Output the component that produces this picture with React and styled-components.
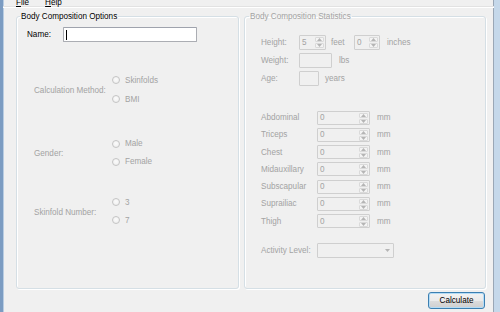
import styled, { createGlobalStyle } from "styled-components";

const GlobalStyle = createGlobalStyle`
    html, body {
        margin: 0;
        padding: 0;
        background: #f0f0f0;
    }
    body {
        font-family: "Liberation Sans", Arial, sans-serif;
        font-size: 8.15px;
    }
`;

const Window = styled.div`
    width: 500px;
    height: 312px;
    box-sizing: border-box;
    display: flex;
    flex-direction: column;
    background: #f0f0f0;
    border-left: 3px solid #7c9cc2;
    border-right: 6px solid #c5d8ea;
    box-shadow: inset 1px 0 0 #b9cde2, inset -1px 0 0 #9aa7b6;
    overflow: hidden;
`;

const MenuBar = styled.div`
    height: 7px;
    display: flex;
    align-items: flex-end;
    padding-left: 10px;
    gap: 10px;
    border-bottom: 1px solid #ffffff;
    box-shadow: 0 -1px 0 #e2e2e2 inset;
    overflow: hidden;
`;

const MenuItem = styled.span`
    line-height: 10px;
    margin-bottom: -0.5px;
    color: #000;
    padding: 0 3px;
`;

const Key = styled.span`
    text-decoration: underline;
`;

const Content = styled.div`
    display: flex;
    gap: 5px;
    padding: 3px 8px 0 13px;
`;

const Group = styled.fieldset`
    margin: 0;
    padding: 0;
    min-inline-size: 0;
    box-sizing: border-box;
    width: ${p => p.$width}px;
    height: 278px;
    border: 1px solid #d5dfe5;
    border-radius: 3px;
    box-shadow: inset 1px 1px 0 #ffffff, 1px 1px 0 #ffffff;
    display: flex;
    flex-direction: column;
`;

const Legend = styled.legend`
    margin-left: ${p => p.$offset}px;
    padding: 0 1px;
    line-height: 11px;
    color: ${p => (p.$disabled ? "#a3a3a3" : "#000")};
`;

const NameRow = styled.div`
    display: flex;
    align-items: center;
    margin-top: 5px;
    padding-left: 10px;
    height: 15px;
`;

const NameLabel = styled.span`
    width: 36px;
    color: #000;
`;

const TextBox = styled.div`
    width: 134px;
    height: 15px;
    box-sizing: border-box;
    background: #fff;
    border: 1px solid #abadb3;
    border-top-color: #9fa3ad;
    border-radius: 1px;
    display: flex;
    align-items: center;
    padding-left: 2px;
`;

const Caret = styled.span`
    width: 1px;
    height: 10px;
    background: #000;
`;

const RadioBlock = styled.div`
    display: grid;
    grid-template-columns: 78px auto;
    align-items: center;
    margin-top: ${p => p.$top}px;
    padding-left: 17px;
`;

const FieldLabel = styled.span`
    color: #a3a3a3;
    padding-top: 2px;
    white-space: nowrap;
`;

const RadioList = styled.div`
    display: flex;
    flex-direction: column;
`;

const RadioOption = styled.div`
    height: ${p => p.$height}px;
    display: flex;
    align-items: center;
    gap: 5px;
    color: #a3a3a3;
`;

const RadioCircle = styled.span`
    width: 8px;
    height: 8px;
    box-sizing: border-box;
    border-radius: 50%;
    border: 1px solid #c4c4c4;
    background: radial-gradient(circle at 50% 40%, #fbfbfb 0%, #ececec 100%);
`;

const StatRow = styled.div`
    display: flex;
    align-items: center;
    height: ${p => p.$height}px;
    margin-top: ${p => p.$top}px;
    padding-left: 16px;
`;

const StatLabel = styled.span`
    width: ${p => p.$width}px;
    color: #a3a3a3;
    white-space: nowrap;
`;

const Unit = styled.span`
    color: #a3a3a3;
    margin-left: ${p => p.$gap}px;
    width: ${p => (p.$width ? `${p.$width}px` : "auto")};
    white-space: nowrap;
`;

const Box = styled.div`
    width: ${p => p.$width}px;
    height: ${p => p.$height}px;
    box-sizing: border-box;
    border: 1px solid #cfcfcf;
    border-radius: 1px;
    background: #f0f0f0;
    display: flex;
    align-items: stretch;
    color: #a3a3a3;
`;

const BoxText = styled.span`
    flex: 1;
    display: flex;
    align-items: center;
    padding-left: 2px;
`;

const SpinButtons = styled.span`
    width: 9px;
    display: flex;
    flex-direction: column;
    margin: 1px;
    gap: 1px;
`;

const SpinHalf = styled.span`
    flex: 1;
    border: 1px solid #dadada;
    border-radius: 1px;
    background: #f4f4f4;
    display: flex;
    align-items: center;
    justify-content: center;
`;

const DropArrow = styled.span`
    width: 12px;
    display: flex;
    align-items: center;
    justify-content: center;
`;

const ButtonRow = styled.div`
    display: flex;
    justify-content: flex-end;
    padding: 3px 9px 0 0;
`;

const Button = styled.button`
    width: 57px;
    height: 17px;
    padding: 0;
    font-family: "Liberation Sans", Arial, sans-serif;
    font-size: 8.15px;
    color: #000;
    border: 1px solid #3c7fb1;
    border-radius: 3px;
    box-shadow: inset 0 0 0 1px #b4dcf6;
    background: linear-gradient(#f2f2f2 0%, #ebebeb 50%, #dddddd 51%, #cfcfcf 100%);
`;

const Tri = ({ up }) => (
    <svg width="5" height="3" viewBox="0 0 5 3">
        <path d={up ? "M0 3 L2.5 0 L5 3 Z" : "M0 0 L5 0 L2.5 3 Z"} fill="#b5b5b5" />
    </svg>
);

const SpinBox = ({ value, width, height }) => (
    <Box $width={width} $height={height}>
        <BoxText>{value}</BoxText>
        <SpinButtons>
            <SpinHalf><Tri up /></SpinHalf>
            <SpinHalf><Tri /></SpinHalf>
        </SpinButtons>
    </Box>
);

const radioBlocks = [
    { label: "Calculation Method:", top: 28.5, height: 19, options: ["Skinfolds", "BMI"] },
    { label: "Gender:", top: 26, height: 18, options: ["Male", "Female"] },
    { label: "Skinfold Number:", top: 22.5, height: 18, options: ["3", "7"] },
];

const skinfolds = ["Abdominal", "Triceps", "Chest", "Midauxillary", "Subscapular", "Suprailiac", "Thigh"];

const App = () => {
    return (
        <Window>
            <GlobalStyle />
            <MenuBar>
                <MenuItem><Key>F</Key>ile</MenuItem>
                <MenuItem><Key>H</Key>elp</MenuItem>
            </MenuBar>
            <Content>
                <Group $width={223}>
                    <Legend $offset={3}>Body Composition Options</Legend>
                    <NameRow>
                        <NameLabel>Name:</NameLabel>
                        <TextBox><Caret /></TextBox>
                    </NameRow>
                    {radioBlocks.map(block => (
                        <RadioBlock key={block.label} $top={block.top}>
                            <FieldLabel>{block.label}</FieldLabel>
                            <RadioList>
                                {block.options.map(opt => (
                                    <RadioOption key={opt} $height={block.height}>
                                        <RadioCircle />
                                        {opt}
                                    </RadioOption>
                                ))}
                            </RadioList>
                        </RadioBlock>
                    ))}
                </Group>
                <Group $width={242}>
                    <Legend $offset={4} $disabled>Body Composition Statistics</Legend>
                    <StatRow $height={15} $top={13}>
                        <StatLabel $width={38}>Height:</StatLabel>
                        <SpinBox value="5" width={27} height={15} />
                        <Unit $gap={5} $width={23}>feet</Unit>
                        <SpinBox value="0" width={26} height={15} />
                        <Unit $gap={7}>inches</Unit>
                    </StatRow>
                    <StatRow $height={15} $top={3}>
                        <StatLabel $width={38}>Weight:</StatLabel>
                        <Box $width={33} $height={15} />
                        <Unit $gap={7}>lbs</Unit>
                    </StatRow>
                    <StatRow $height={15} $top={3}>
                        <StatLabel $width={38}>Age:</StatLabel>
                        <Box $width={20} $height={15} />
                        <Unit $gap={6}>years</Unit>
                    </StatRow>
                    {skinfolds.map((name, i) => (
                        <StatRow key={name} $height={14} $top={i === 0 ? 24.5 : 3.3}>
                            <StatLabel $width={56}>{name}</StatLabel>
                            <SpinBox value="0" width={53} height={14} />
                            <Unit $gap={7}>mm</Unit>
                        </StatRow>
                    ))}
                    <StatRow $height={15} $top={14.7}>
                        <StatLabel $width={56}>Activity Level:</StatLabel>
                        <Box $width={77} $height={15}>
                            <BoxText />
                            <DropArrow><Tri /></DropArrow>
                        </Box>
                    </StatRow>
                </Group>
            </Content>
            <ButtonRow>
                <Button>Calculate</Button>
            </ButtonRow>
        </Window>
    );
};

export default App;
